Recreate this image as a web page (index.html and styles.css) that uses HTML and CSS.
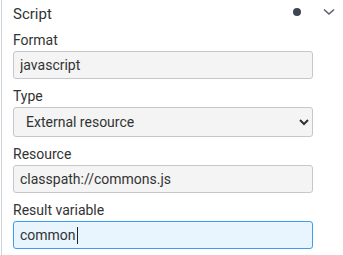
FILE: index.html
```html
<!DOCTYPE html>
<html>
<head>
    <meta charset="utf-8">
    <title>Script</title>
    <link rel="stylesheet" href="styles.css">
</head>
<body>
    <div class="panel">
        <div class="panel-header">
            <span class="panel-title">Script</span>
            <span class="dot"></span>
            <svg class="chevron" width="12" height="8" viewBox="0 0 12 8">
                <path d="M1 1.5 L6 6 L11 1.5" fill="none" stroke="#5b6070" stroke-width="1.6"/>
            </svg>
        </div>
        <div class="field">
            <label class="field-label">Format</label>
            <input class="field-input" type="text" value="javascript">
        </div>
        <div class="field">
            <label class="field-label">Type</label>
            <select class="field-select">
                <option>External resource</option>
                <option>Inline script</option>
            </select>
        </div>
        <div class="field">
            <label class="field-label">Resource</label>
            <input class="field-input" type="text" value="classpath://commons.js">
        </div>
        <div class="field">
            <label class="field-label">Result variable</label>
            <div class="field-input focused">common<span class="caret"></span></div>
        </div>
    </div>
</body>
</html>
```

FILE: styles.css
```css
body {
    margin: 0;
    background: #fff;
    color: #333;
    font-family: Roboto, "Liberation Sans", sans-serif;
    font-size: 14px;
}

.panel {
    margin-left: 1px;
    border-left: 1px solid #d0d2d9;
    padding: 0 0 10px 11px;
    min-height: 255px;
    box-sizing: border-box;
}

.panel-header {
    display: flex;
    align-items: center;
    height: 23px;
    padding: 1px 8px 0 0;
    box-sizing: border-box;
}

.panel-title {
    flex: 1;
    padding-top: 3px;
    font-size: 15px;
    color: #333;
}

.dot {
    width: 8px;
    height: 8px;
    border-radius: 50%;
    background: #404552;
    margin-right: 22px;
}

.field {
    margin-top: 7px;
}

.field-label {
    display: block;
    line-height: 20px;
    margin-bottom: 1px;
    color: #333;
}

.field-input,
.field-select {
    display: block;
    box-sizing: border-box;
    width: 300px;
    height: 28px;
    margin: 0;
    padding: 0 6px;
    border: 1px solid #c6c7cb;
    border-radius: 3px;
    background: #f4f4f4;
    color: #333;
    font: inherit;
    line-height: 26px;
    outline: none;
}

.field-select {
    height: 30px;
    padding-left: 8px;
}

.field-input.focused {
    background: #e8f4fe;
    border-color: #3d9ef0;
}

.caret {
    display: inline-block;
    width: 1px;
    height: 17px;
    margin-left: 1px;
    vertical-align: -4px;
    background: #222;
}
```
